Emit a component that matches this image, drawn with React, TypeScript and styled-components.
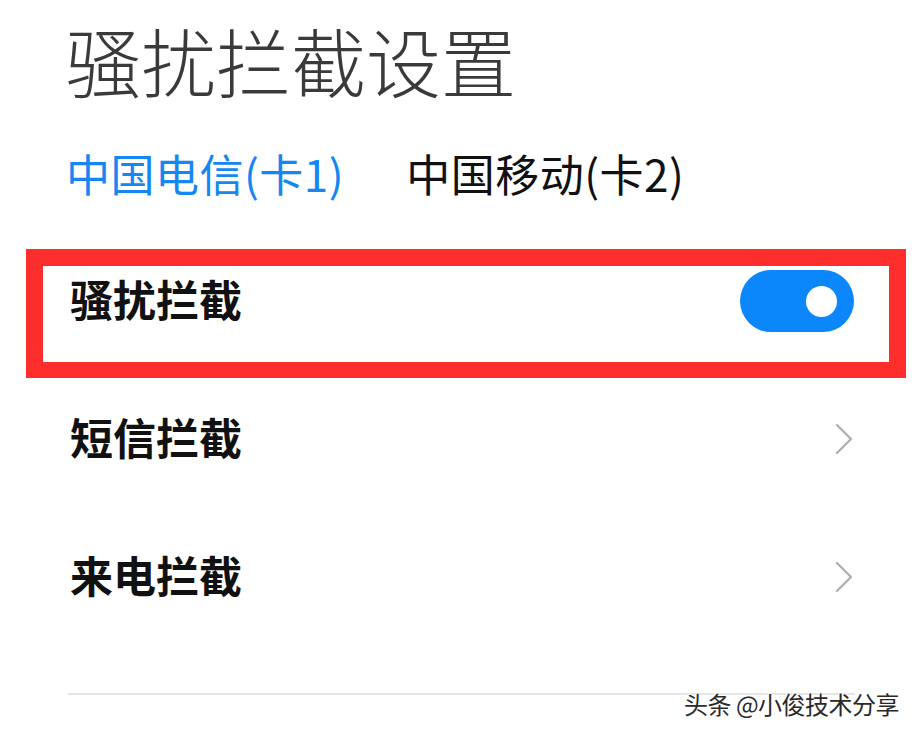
import styled, { createGlobalStyle } from "styled-components";

const GlobalStyle = createGlobalStyle`
  html, body {
    margin: 0;
    padding: 0;
    background: #ffffff;
  }
  body {
    font-family: "Noto Sans CJK SC", "Noto Sans", sans-serif;
  }
`;

type Row = { label: string; kind: "toggle" | "link"; marked?: boolean };

const rows: Row[] = [
  { label: "骚扰拦截", kind: "toggle", marked: true },
  { label: "短信拦截", kind: "link" },
  { label: "来电拦截", kind: "link" },
];

export default function App() {
  return (
    <Page>
      <GlobalStyle />
      <Header>
        <Title>骚扰拦截设置</Title>
        <Tabs>
          <Tab $active>中国电信(卡1)</Tab>
          <Tab>中国移动(卡2)</Tab>
        </Tabs>
      </Header>
      <List>
        {rows.map((row) => (
          <Item key={row.label}>
            {row.marked && <Mark />}
            <Label>{row.label}</Label>
            {row.kind === "toggle" ? (
              <Switch>
                <Knob />
              </Switch>
            ) : (
              <Chevron viewBox="0 0 18 32">
                <polyline points="2,2 16,16 2,30" />
              </Chevron>
            )}
          </Item>
        ))}
      </List>
      <Divider />
      <Watermark>头条 @小俊技术分享</Watermark>
    </Page>
  );
}

const Page = styled.main`
  position: relative;
  width: 923px;
  height: 737px;
  overflow: hidden;
  background: #fff;
`;

const Header = styled.header`
  padding-left: 66px;
`;

const Title = styled.h1`
  margin: 0;
  height: 120px;
  line-height: 120px;
  font-size: 75px;
  font-weight: 300;
  color: #3a3a3a;
`;

const Tabs = styled.nav`
  display: flex;
  gap: 62px;
  margin-top: 22px;
  height: 62px;
  align-items: center;
`;

const Tab = styled.span<{ $active?: boolean }>`
  font-size: 44px;
  letter-spacing: 0.5px;
  line-height: 62px;
  color: ${(p) => (p.$active ? "#1686f2" : "#111")};
`;

const List = styled.section`
  margin-top: 28px;
`;

const Item = styled.div`
  position: relative;
  display: flex;
  align-items: center;
  justify-content: space-between;
  height: 138px;
  padding: 0 69px 0 70px;
`;

const Mark = styled.div`
  position: absolute;
  left: 26px;
  right: 17px;
  top: 17px;
  bottom: -8px;
  border: 17px solid #fe2e2c;
  border-bottom-width: 16px;
  pointer-events: none;
`;

const Label = styled.span`
  font-size: 43px;
  font-weight: 700;
  color: #111;
  margin-bottom: 7px;
`;

const Switch = styled.div`
  display: flex;
  align-items: center;
  justify-content: flex-end;
  width: 114px;
  height: 62px;
  padding-right: 17px;
  box-sizing: border-box;
  border-radius: 31px;
  background: #0c86fb;
`;

const Knob = styled.div`
  width: 31px;
  height: 31px;
  border-radius: 50%;
  background: #fff;
`;

const Chevron = styled.svg`
  width: 18px;
  height: 32px;
  margin-right: 1px;
  fill: none;
  stroke: #b0b0b0;
  stroke-width: 2.4;
  stroke-linecap: round;
  stroke-linejoin: round;
`;

const Divider = styled.hr`
  margin: 47px 68px 0 68px;
  border: none;
  border-top: 2px solid #e6e6e6;
`;

const Watermark = styled.div`
  position: absolute;
  left: 684px;
  top: 686px;
  font-size: 24px;
  letter-spacing: -0.5px;
  color: #2a2a2a;
  text-shadow: -1px -1px 0 #fff, 1px 1px 0 #fff;
`;
